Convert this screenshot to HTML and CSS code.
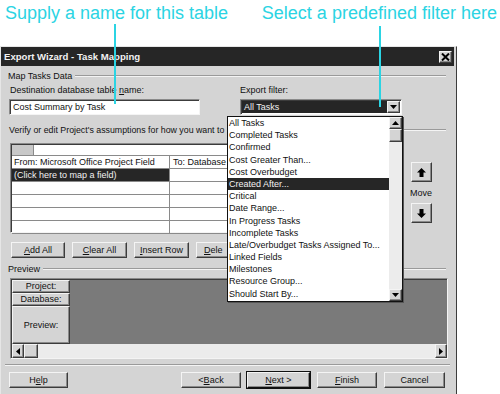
FILE: index.html
```html
<!DOCTYPE html>
<html>
<head>
<meta charset="utf-8">
<link rel="stylesheet" href="styles.css">
</head>
<body>
<div class="page">
  <div class="callouts">
    <span class="callout">Supply a name for this table</span>
    <span class="callout">Select a predefined filter here</span>
  </div>

  <div class="dialog">
    <div class="titlebar">
      <span class="title">Export Wizard - Task Mapping</span>
      <span class="close raised"><svg width="9" height="8" viewBox="0 0 9 8"><path d="M1 0.5 L8 7.5 M8 0.5 L1 7.5" stroke="#000" stroke-width="2"/></svg></span>
    </div>

    <div class="content">
      <div class="group"><span class="group-label">Map Tasks Data</span><span class="etch"></span></div>

      <div class="fields labels">
        <span class="lbl1">Destination database table <u>n</u>ame:</span>
        <span>Export filter:</span>
      </div>
      <div class="fields">
        <div class="input sunken">Cost Summary by Task</div>
        <div class="combo sunken">
          <span class="combo-value">All Tasks</span>
          <span class="arrow-btn raised"><svg width="7" height="4" viewBox="0 0 7 4"><path d="M0 0 H7 L3.5 4 Z" fill="#000"/></svg></span>
        </div>
      </div>

      <div class="verify-row">
        <span class="verify">Verify or edit Project's assumptions for how you want to</span>
        <span class="etch short"></span>
      </div>

      <div class="mapping">
        <div class="grid sunken">
          <div class="grid-top"><span class="corner"></span><span class="grid-edit"></span></div>
          <div class="row head"><span class="c1">From: Microsoft Office Project Field</span><span class="c2">To: Database</span></div>
          <div class="row sel"><span class="c1">(Click here to map a field)</span><span class="c2"></span></div>
          <div class="row"><span class="c1"></span><span class="c2"></span></div>
          <div class="row"><span class="c1"></span><span class="c2"></span></div>
          <div class="row"><span class="c1"></span><span class="c2"></span></div>
          <div class="row"><span class="c1"></span><span class="c2"></span></div>
        </div>
        <div class="move">
          <span class="move-btn raised"><svg width="9" height="9" viewBox="0 0 9 9"><path d="M4.5 0 L9 4.5 H6.5 V9 H2.5 V4.5 H0 Z" fill="#000"/></svg></span>
          <span class="move-label">Move</span>
          <span class="move-btn raised"><svg width="9" height="9" viewBox="0 0 9 9"><path d="M4.5 9 L9 4.5 H6.5 V0 H2.5 V4.5 H0 Z" fill="#000"/></svg></span>
        </div>
      </div>

      <div class="actions">
        <span class="btn raised w54"><u>A</u>dd All</span>
        <span class="btn raised w55"><u>C</u>lear All</span>
        <span class="btn raised w55"><u>I</u>nsert Row</span>
        <span class="btn raised w55 clipped"><u>D</u>ele</span>
      </div>

      <div class="group pv"><span class="group-label">Preview</span><span class="etch"></span></div>

      <div class="preview sunken">
        <div class="preview-main">
          <div class="preview-labels">
            <span class="plabel raised">Project:</span>
            <span class="plabel raised">Database:</span>
            <span class="plabel raised tall">Preview:</span>
          </div>
          <div class="preview-area"></div>
        </div>
        <div class="hscroll">
          <span class="sbtn raised"><svg width="4" height="7" viewBox="0 0 4 7"><path d="M4 0 V7 L0 3.5 Z" fill="#000"/></svg></span>
          <span class="sthumb raised"></span>
          <span class="strack"></span>
          <span class="sbtn raised"><svg width="4" height="7" viewBox="0 0 4 7"><path d="M0 0 V7 L4 3.5 Z" fill="#000"/></svg></span>
        </div>
      </div>

      <div class="separator"></div>

      <div class="footer">
        <span class="btn raised w59">H<u>e</u>lp</span>
        <span class="nav">
          <span class="btn raised w60">&lt; <u>B</u>ack</span>
          <span class="btn raised default w63"><u>N</u>ext &gt;</span>
          <span class="btn raised w60"><u>F</u>inish</span>
          <span class="btn raised w61">Cancel</span>
        </span>
      </div>
    </div>
  </div>

  <div class="dropdown">
    <ul class="options">
      <li>All Tasks</li>
      <li>Completed Tasks</li>
      <li>Confirmed</li>
      <li>Cost Greater Than...</li>
      <li>Cost Overbudget</li>
      <li class="hl">Created After...</li>
      <li>Critical</li>
      <li>Date Range...</li>
      <li>In Progress Tasks</li>
      <li>Incomplete Tasks</li>
      <li>Late/Overbudget Tasks Assigned To...</li>
      <li>Linked Fields</li>
      <li>Milestones</li>
      <li>Resource Group...</li>
      <li>Should Start By...</li>
    </ul>
    <div class="vscroll">
      <span class="vbtn raised"><svg width="7" height="4" viewBox="0 0 7 4"><path d="M0 4 H7 L3.5 0 Z" fill="#000"/></svg></span>
      <span class="vthumb raised"></span>
      <span class="vtrack"></span>
      <span class="vbtn raised"><svg width="7" height="4" viewBox="0 0 7 4"><path d="M0 0 H7 L3.5 4 Z" fill="#000"/></svg></span>
    </div>
  </div>

  <span class="pointer p1"></span>
  <span class="pointer p2"></span>
</div>
</body>
</html>
```

FILE: styles.css
```css
* { box-sizing: border-box; }
html, body { margin: 0; padding: 0; background: #fff; }
body {
  font: 9px "Liberation Sans", Arial, sans-serif;
  color: #111;
}
.page { position: relative; width: 500px; height: 394px; overflow: hidden; }

.callouts {
  height: 46px;
  display: flex;
  justify-content: space-between;
  padding: 2px 3px 0 5px;
}
.callout {
  font: 18px "Liberation Sans", Arial, sans-serif;
  color: #2bd4e3;
  line-height: 22px;
}

.pointer { position: absolute; width: 2px; background: #2bd4e3; }
.p1 { left: 114px; top: 24px; height: 80px; }
.p2 { left: 379px; top: 26px; height: 81px; }

.raised {
  background: #d4d4d4;
  border: 1px solid;
  border-color: #f4f4f4 #3c3c3c #3c3c3c #f4f4f4;
  box-shadow: inset -1px -1px #8a8a8a;
}
.sunken {
  border: 1px solid;
  border-color: #8a8a8a #f4f4f4 #f4f4f4 #8a8a8a;
  box-shadow: inset 1px 1px #3c3c3c;
}

.dialog {
  width: 457px;
  height: 350px;
  background: #d4d4d4;
  border: 1px solid;
  border-color: #e6e6e6 #3c3c3c #3c3c3c #e6e6e6;
  padding: 0 2px 0 0;
}
.titlebar {
  height: 19px;
  background: #262626;
  display: flex;
  align-items: center;
  justify-content: space-between;
  padding: 0 2px 0 3px;
}
.title { color: #f2f2f2; font-weight: bold; font-size: 9.6px; }
.close {
  width: 13px; height: 12px;
  display: flex; align-items: center; justify-content: center;
}

.content { padding: 0 8px 0 8px; }

.group { display: flex; align-items: center; height: 12px; margin-top: 4px; margin-left: -1px; }
.group-label { line-height: 12px; padding-right: 3px; }
.etch { flex: 1; border-top: 1px solid #9a9a9a; border-bottom: 1px solid #f4f4f4; }
.group.pv { margin-top: 5px; }

.fields {
  display: grid;
  grid-template-columns: 191px 162px;
  column-gap: 40px;
  margin-top: 3px;
  height: 16px;
}
.fields.labels { margin-top: 2px; height: 12px; line-height: 12px; }
.lbl1 { padding-left: 1px; }
.input {
  background: #fff;
  padding: 1px 3px;
  line-height: 12px;
}
.combo { display: flex; background: #fff; padding: 1px; }
.combo-value {
  flex: 1;
  background: #262626;
  color: #f2f2f2;
  line-height: 12px;
  padding-left: 2px;
}
.arrow-btn {
  width: 13px;
  display: flex; align-items: center; justify-content: center;
}

.verify-row { display: flex; align-items: center; margin-top: 9px; height: 12px; }
.verify { flex: none; line-height: 12px; white-space: nowrap; font-size: 8.8px; }
.etch.short { flex: none; width: 46px; margin-left: auto; }

.mapping { display: flex; margin-top: 7px; height: 90px; }
.grid {
  width: 390px;
  flex: none;
  margin-left: 1px;
  background: #fff;
  padding: 1px 0 0 1px;
}
.grid-top { display: flex; height: 11px; border-bottom: 1px solid #8a8a8a; }
.corner { width: 22px; background: #c8c8c8; border-right: 1px solid #8a8a8a; }
.grid-edit { flex: 1; }
.row { display: flex; height: 13px; border-bottom: 1px solid #8a8a8a; line-height: 12px; }
.row .c1 { width: 158px; border-right: 1px solid #8a8a8a; padding-left: 2px; white-space: nowrap; overflow: hidden; }
.row .c2 { flex: 1; padding-left: 3px; white-space: nowrap; }
.row.sel .c1 { background: #262626; color: #f2f2f2; }

.move {
  width: 22px;
  flex: none;
  margin-left: 10px;
  display: flex;
  flex-direction: column;
  align-items: center;
  padding-top: 19px;
}
.move-btn {
  width: 21px; height: 20px;
  display: flex; align-items: center; justify-content: center;
}
.move-label { line-height: 12px; margin: 5px 0 4px; }

.actions { display: flex; gap: 7px; margin-top: 9px; margin-left: 2px; }
.btn {
  height: 16px;
  display: inline-flex;
  align-items: center;
  justify-content: center;
  line-height: 12px;
  white-space: nowrap;
}
.btn.clipped { justify-content: flex-start; padding-left: 7px; }
.w54 { width: 54px; }
.w55 { width: 55px; }
.w59 { width: 59px; }
.w60 { width: 60px; }
.w61 { width: 61px; }
.w63 { width: 63px; }
.btn.default { outline: 1px solid #111; border-color: #f4f4f4 #111 #111 #f4f4f4; }

.preview {
  width: 438px;
  height: 81px;
  margin-top: 3px;
  margin-left: 1px;
  padding: 1px 0 0 1px;
  display: flex;
  flex-direction: column;
}
.preview-main { flex: 1; display: flex; }
.preview-labels { width: 58px; display: flex; flex-direction: column; }
.plabel { height: 13px; line-height: 11px; text-align: center; }
.plabel.tall { flex: 1; display: flex; align-items: center; justify-content: center; }
.preview-area { flex: 1; background: #7a7a7a; }
.hscroll { height: 14px; display: flex; background: #ececec; }
.sbtn { width: 12px; display: flex; align-items: center; justify-content: center; }
.sthumb { width: 14px; }
.strack { flex: 1; }

.separator {
  margin: 5px -4px 0 -4px;
  border-top: 1px solid #9a9a9a;
  border-bottom: 1px solid #f4f4f4;
}

.footer { display: flex; margin-top: 6px; }
.nav { margin-left: auto; display: flex; gap: 7px; margin-right: 1px; }
.nav .btn.w60:first-child { margin-right: -1px; }

.dropdown {
  position: absolute;
  left: 227px;
  top: 116px;
  width: 176px;
  height: 186px;
  background: #fff;
  border: 1px solid #111;
  box-shadow: 1px 1px 0 #555;
  display: flex;
}
.options { list-style: none; margin: 0; padding: 0; flex: 1; min-width: 0; overflow: hidden; }
.options li {
  height: 12.2px;
  line-height: 12.2px;
  padding-left: 1px;
  white-space: nowrap;
}
.options li.hl { background: #262626; color: #f2f2f2; }
.vscroll { width: 13px; flex: none; display: flex; flex-direction: column; background: #ececec; }
.vbtn { height: 12px; display: flex; align-items: center; justify-content: center; }
.vthumb { height: 13px; }
.vtrack { flex: 1; }
```
